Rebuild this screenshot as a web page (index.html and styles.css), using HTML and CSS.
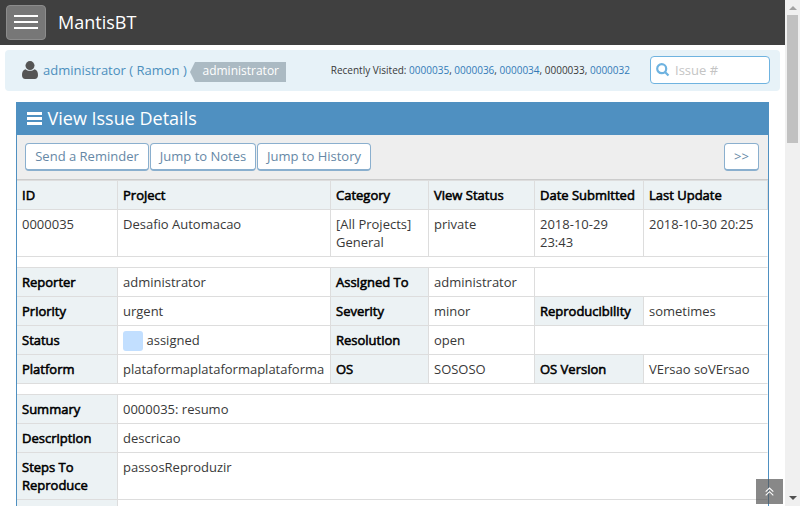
FILE: index.html
```html
<!DOCTYPE html>
<html lang="en">
<head>
<meta charset="utf-8">
<title>View Issue Details - MantisBT</title>
<link rel="stylesheet" href="styles.css">
</head>
<body>
<div class="viewport">
<div class="page">
  <header class="navbar">
    <button class="menu-toggler" aria-label="Menu"><span></span><span></span><span></span></button>
    <a class="brand">MantisBT</a>
  </header>
  <div class="breadcrumbs">
    <svg class="user-icon" width="16" height="18" viewBox="0 0 16 18"><path d="M3.6 8.2C1 8.6 0 11 0 14.2C0 16.500 1.300 18 3.300 18H12.700C14.700 18 16 16.500 16 14.200C16 11 15 8.600 12.400 8.200C11.300 9.200 9.800 9.800 8 9.800C6.200 9.800 4.700 9.200 3.600 8.200Z"/><circle cx="8" cy="4.600" r="4.500"/></svg>
    <a class="user">administrator ( Ramon )</a>
    <span class="label">administrator</span>
    <div class="recent">Recently Visited: <a>0000035</a>, <a>0000036</a>, <a>0000034</a>, 0000033, <a>0000032</a></div>
    <div class="search">
      <svg width="14" height="14" viewBox="0 0 14 14"><circle cx="5.700" cy="5.700" r="4.500"/><path d="M9 9L12.500 12.500"/></svg>
      <span>Issue #</span>
    </div>
  </div>
  <main class="widget">
    <h4 class="widget-header">
      <svg width="15" height="13" viewBox="0 0 15 13"><path d="M0 0h15v3H0zM0 5h15v3H0zM0 10h15v3H0z"/></svg>
      <span>View Issue Details</span>
    </h4>
    <div class="toolbox">
      <a class="btn reminder">Send a Reminder</a>
      <a class="btn notes">Jump to Notes</a>
      <a class="btn history">Jump to History</a>
      <a class="btn next">&gt;&gt;</a>
    </div>
    <table>
      <colgroup><col class="c1"><col class="c2"><col class="c3"><col class="c4"><col class="c5"><col class="c6"></colgroup>
      <tr class="head"><th>ID</th><th>Project</th><th>Category</th><th>View Status</th><th>Date Submitted</th><th>Last Update</th></tr>
      <tr><td>0000035</td><td>Desafio Automacao</td><td>[All Projects] General</td><td>private</td><td>2018-10-29 23:43</td><td>2018-10-30 20:25</td></tr>
      <tr class="spacer"><td colspan="6"></td></tr>
      <tr><th>Reporter</th><td>administrator</td><th>Assigned To</th><td>administrator</td><td colspan="2"></td></tr>
      <tr><th>Priority</th><td>urgent</td><th>Severity</th><td>minor</td><th>Reproducibility</th><td>sometimes</td></tr>
      <tr><th>Status</th><td><div class="status"><i></i>assigned</div></td><th>Resolution</th><td>open</td><td colspan="2"></td></tr>
      <tr><th>Platform</th><td>plataformaplataformaplataforma</td><th>OS</th><td>SOSOSO</td><th>OS Version</th><td>VErsao soVErsao</td></tr>
      <tr class="spacer"><td colspan="6"></td></tr>
      <tr><th>Summary</th><td colspan="5">0000035: resumo</td></tr>
      <tr><th>Description</th><td colspan="5">descricao</td></tr>
      <tr><th>Steps To Reproduce</th><td colspan="5">passosReproduzir</td></tr>
      <tr><th></th><td colspan="5"></td></tr>
    </table>
  </main>
</div>
<div class="scrollbar">
  <span class="arrow up"></span>
  <span class="thumb"></span>
  <span class="arrow down"></span>
</div>
<a class="scroll-up" aria-label="Scroll to top"><svg width="9" height="9" viewBox="0 0 9 9"><path d="M.7 4.700L4.500 1L8.300 4.700M.7 8.400L4.500 4.700L8.300 8.400"/></svg></a>
</div>
</body>
</html>
```
FILE: styles.css
```css
* { box-sizing: border-box; }
html, body { margin: 0; height: 100%; overflow: hidden; }
body { font: 13px/18px "Open Sans", sans-serif; color: #393939; background: #fff; }
.viewport { position: relative; display: flex; height: 506px; overflow: hidden; }
.page { width: 785px; flex: none; }

.navbar { display: flex; align-items: center; height: 45px; padding-left: 6px; background: #404040; }
.menu-toggler { display: flex; flex-direction: column; justify-content: center; gap: 4px; width: 40px; height: 35px; padding: 0 7px 1px; border: 1px solid #8c8c8c; border-radius: 4px; background: #777; }
.menu-toggler span { height: 2px; background: #fff; }
.brand { margin-left: 12px; font-size: 18px; line-height: 25px; color: #fff; }

.breadcrumbs { display: flex; align-items: center; height: 41px; margin: 5px 5px 0; padding: 0 10px 1px 17px; border-radius: 4px; background: #e7f2f8; }
.user-icon { fill: #555; margin-right: 5px; }
.user { color: #4c8fbd; white-space: nowrap; width: 147px; }
.label { width: 96px; height: 20px; margin: 4px 0 0; padding-left: 12.5px; font-size: 12px; line-height: 18px; color: #fff; background: #abbac3; clip-path: polygon(5px 0, 100% 0, 100% 100%, 5px 100%, 0 50%); }
.recent { margin-left: auto; font-size: 10px; white-space: nowrap; }
.recent a { color: #337ab7; }
.search { display: flex; align-items: center; width: 120px; height: 28px; margin-left: 20px; padding-left: 5px; border: 1px solid #6fb3e0; border-radius: 4px; background: #fff; color: #c4c4c4; }
.search svg { fill: none; stroke: #6fb3e0; stroke-width: 2.200; margin-right: 5px; }

.widget { width: 753px; margin: 11px 0 0 16px; border: solid #4f90c1; border-width: 0 1px; }
.widget-header { display: flex; align-items: center; gap: 5.5px; height: 33px; margin: 0; padding: 0 0 1px 10px; font-size: 18px; font-weight: 400; color: #fff; background: #4f90c1; }
.widget-header svg { fill: #fff; margin-top: 1px; }
.toolbox { display: flex; gap: 1px; height: 45px; padding: 8px 9px 0 8px; background: #eee; border-bottom: 1px solid #ccc; }
.btn { height: 28px; border: 1px solid #8aafce; border-bottom-width: 2px; border-radius: 4px; background: #fff; color: #6688a6; line-height: 25px; text-align: center; white-space: nowrap; }
.reminder { width: 124px; }
.notes { width: 106px; }
.history { width: 114px; }
.next { width: 35px; margin-left: auto; }

table { width: 751px; table-layout: fixed; border-collapse: separate; border-spacing: 0; border-top: 1px solid #ddd; }
.c1 { width: 101px; } .c2 { width: 213px; } .c3 { width: 98px; } .c4 { width: 106px; } .c5 { width: 109px; } .c6 { width: 124px; }
th, td { height: 29px; padding: 5px; border: solid #ddd; border-width: 0 1px 1px 0; text-align: left; vertical-align: top; }
td:last-child { border-right-color: transparent; }
th { font-weight: 400; color: #000; -webkit-text-stroke: .55px #000; background: #ecf2f4; }
.spacer td { height: 11px; padding: 0; }
.status { display: flex; height: 18px; }
.status i { width: 20px; height: 20px; margin-right: 3.5px; border-radius: 3px; background: #c2dfff; }

.scrollbar { display: flex; flex-direction: column; align-items: center; width: 15px; height: 506px; background: #f0f0f0; }
.arrow { border: 4px solid transparent; border-top-width: 0; border-bottom: 4px solid #a3a3a3; }
.up { margin-top: 6px; }
.thumb { width: 11px; height: 128px; margin-top: 5px; background: #c1c1c1; }
.down { margin: auto 0 6px; border-top: 4px solid #505050; border-bottom-width: 0; }
.scroll-up { position: absolute; left: 756px; top: 479px; width: 27px; height: 25px; display: flex; align-items: center; justify-content: center; background: rgba(85,85,85,.7); }
.scroll-up svg { fill: none; stroke: #fff; stroke-width: 1.100; }
```
